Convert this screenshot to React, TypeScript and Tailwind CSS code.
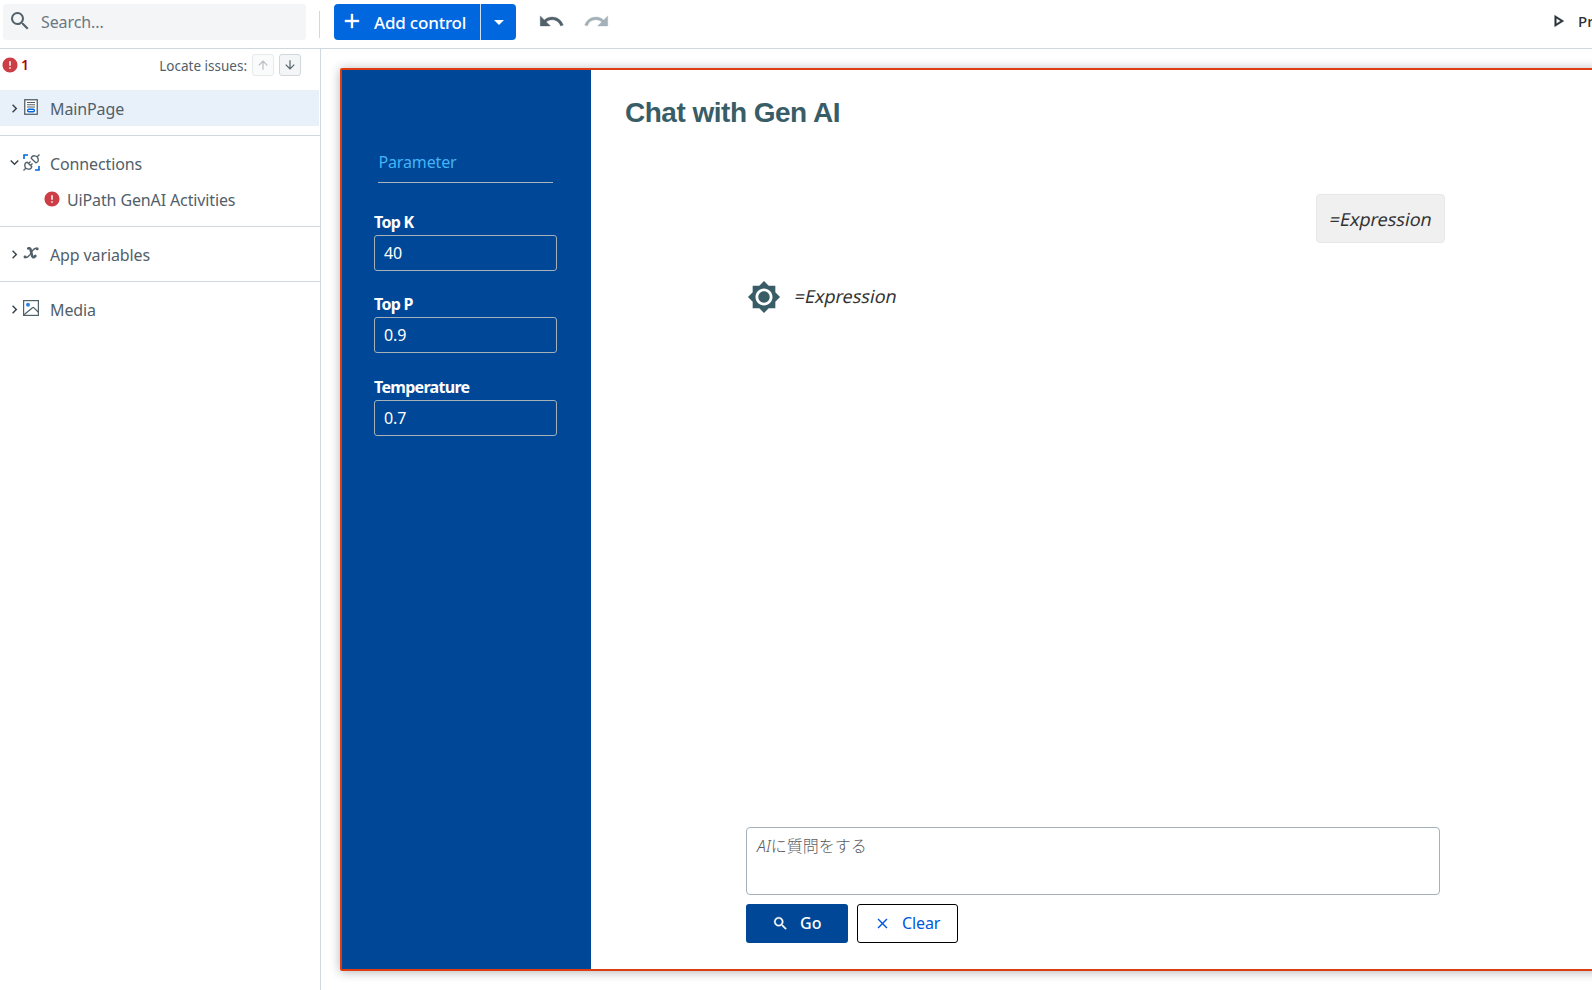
import type { ReactNode } from "react";
import {
  MdAdd,
  MdArrowDownward,
  MdArrowDropDown,
  MdArrowUpward,
  MdBrightness7,
  MdChevronRight,
  MdClose,
  MdError,
  MdExpandMore,
  MdOutlinePlayArrow,
  MdRedo,
  MdSearch,
  MdUndo,
} from "react-icons/md";

function PageIcon() {
  return (
    <svg className="h-4 w-4" viewBox="0 0 16 16" fill="none">
      <rect x="1.75" y="0.75" width="12.5" height="14.5" fill="#fff" stroke="#526069" strokeWidth="1.3" />
      <path d="M4 3.5h8M4 5.8h8M4 8h8" stroke="#526069" strokeWidth="1.1" />
      <rect x="4.6" y="10.2" width="6.8" height="2.6" rx="1.2" stroke="#0067df" strokeWidth="1.4" />
    </svg>
  );
}

function ConnectionsIcon() {
  return (
    <svg className="h-[17px] w-[17px] shrink-0" viewBox="0 0 17 17" fill="none">
      <path d="M1 5V1h4M16 12v4h-4" stroke="#0067df" strokeWidth="1.6" />
      <g stroke="#526069" strokeWidth="1.3">
        <path d="M8.2 4.2 12.8 8.8C14.3 8.4 15.6 7 15.2 5 14.9 3.4 13.6 2 12 1.8 10 1.5 8.6 2.7 8.2 4.2Z" />
        <path d="M14.2 2.8 16.5 0.5M4.2 8.2 8.8 12.8C8.4 14.3 7 15.3 5 15.2 3.4 15 2 13.6 1.8 12 1.6 10 2.7 8.6 4.2 8.2Z" />
        <path d="M2.8 14.2.5 16.5M5.5 9.5 7.5 7.5M7.5 11.5 9.5 9.5" />
      </g>
    </svg>
  );
}

function VariableIcon() {
  return (
    <svg className="h-3 w-4" viewBox="0 0 16 12" fill="none" stroke="#526069" strokeLinecap="round">
      <path d="M5.2 1.4C7 .9 7.5 1.8 7.9 3.7L8.9 8.3C9.3 10.3 10.4 11 12.3 9" strokeWidth="2.6" />
      <path d="M14.6 1.5C11 .2 9.5 3.5 8 6 6.5 8.5 4.5 11.5 1.5 10.3" strokeWidth="1.3" />
      <path d="M14 1.9h.3M1.9 9.9h.3" strokeWidth="2.6" />
    </svg>
  );
}

function MediaIcon() {
  return (
    <svg className="h-4 w-4" viewBox="0 0 16 16" fill="none">
      <rect x=".6" y=".6" width="14.8" height="14.8" stroke="#526069" strokeWidth="1.2" />
      <circle cx="5" cy="4.8" r="2" fill="#2f80e4" />
      <path d="M1 14.8 9.5 7.7Q10.3 7.1 11 7.8L15.2 12" stroke="#526069" strokeWidth="1.2" />
    </svg>
  );
}

function TreeRow({ icon, label, open, active }: { icon: ReactNode; label: string; open?: boolean; active?: boolean }) {
  return (
    <div className={`mr-px flex h-9 items-center pl-[6px] ${active ? "bg-[#e8f0fa]" : "pb-[2px]"}`}>
      {open ? <MdExpandMore className="-mt-[2px] size-[17px] text-[#374148]" /> : <MdChevronRight className="size-[17px] text-[#374148]" />}
      <span className="-mt-[2px] flex w-4 shrink-0 justify-center">{icon}</span>
      <span className="ml-[11px] pt-0.5 tracking-[-0.12px]">{label}</span>
    </div>
  );
}

function Field({ label, value }: { label: string; value: string }) {
  return (
    <div>
      <div className="h-6 text-[16px] leading-[23px] font-bold tracking-[-0.7px]">{label}</div>
      <div className="flex h-9 items-center rounded-[3px] border border-[#a4b1b8] pl-[9px] text-[16px] tracking-[-0.15px]">{value}</div>
    </div>
  );
}

export default function App() {
  return (
    <div className="flex h-[990px] w-[1592px] flex-col overflow-hidden bg-white font-['Noto_Sans','Noto_Sans_CJK_JP',sans-serif] text-[16px] text-[#526069]">
      <header className="flex h-[49px] shrink-0 items-start border-b border-[#cfd8dd] pt-1 pl-[3px]">
        <div className="flex h-9 w-[303px] items-center rounded-[3px] bg-[#f4f5f7] pl-[5px]">
          <MdSearch className="-mt-[2px] size-6" />
          <span className="ml-[9px] tracking-[-0.1px] text-[#6b7882]">Search...</span>
        </div>
        <div className="mt-[7px] ml-[13px] h-[27px] w-px bg-[#cfd8dd]" />
        <div className="ml-[14px] flex h-9 w-[182px] overflow-hidden rounded-[4px] bg-[#0067df] text-white">
          <div className="flex w-[147px] items-center border-r border-white/80 pl-[6px]">
            <MdAdd className="-mt-[3px] size-6 shrink-0 [&>path:last-child]:stroke-white [&>path:last-child]:stroke-[0.4px]" />
            <span className="mt-[1px] ml-[10px] text-[17px] font-medium tracking-[-0.2px] whitespace-nowrap">Add control</span>
          </div>
          <div className="flex flex-1 items-center justify-center">
            <MdArrowDropDown className="size-6" />
          </div>
        </div>
        <MdUndo className="mt-[4px] ml-[22px] size-[27px] [&>path:last-child]:stroke-current [&>path:last-child]:stroke-[0.3px]" />
        <MdRedo className="mt-[4px] ml-[18px] size-[27px] text-[#a4b1b8] [&>path:last-child]:stroke-current [&>path:last-child]:stroke-[0.3px]" />
        <div className="ml-auto flex h-9 w-[44px] shrink-0 items-center overflow-hidden text-[#273139]">
          <MdOutlinePlayArrow className="-mt-[2px] size-[20px] shrink-0 [&>path:last-child]:stroke-current [&>path:last-child]:stroke-[0.4px]" />
          <span className="-mt-[2px] ml-[10px] text-[15px] font-medium">Preview</span>
        </div>
      </header>

      <div className="flex min-h-0 flex-1">
        <aside className="w-[321px] shrink-0 border-r border-[#cfd8dd]">
          <div className="flex h-[41px] items-start pt-[5px] pl-px">
            <MdError className="mt-[2px] size-[18px] text-[#cc3d45]" />
            <span className="ml-[2px] text-[14px] leading-[22px] font-semibold text-[#a6040a]">1</span>
            <span className="ml-auto text-[13.5px] leading-[24px] whitespace-nowrap">Locate issues:</span>
            <div className="ml-[5px] flex size-[22px] items-center justify-center rounded-[3px] border border-[#e6eaed] bg-[#fafbfb] text-[#b5bdc2]">
              <MdArrowUpward className="size-[14px]" />
            </div>
            <div className="mr-[19px] ml-[5px] flex size-[22px] items-center justify-center rounded-[3px] border border-[#cfd8dd] bg-[#f4f5f7]">
              <MdArrowDownward className="size-[14px]" />
            </div>
          </div>
          <div className="border-b border-[#cfd8dd] pb-[9px]">
            <TreeRow icon={<PageIcon />} label="MainPage" active />
          </div>
          <div className="border-b border-[#cfd8dd] pt-[10px] pb-2">
            <TreeRow icon={<ConnectionsIcon />} label="Connections" open />
            <div className="flex h-9 items-center pl-[43px]">
              <MdError className="-mt-[3px] size-[18px] text-[#cc3d45]" />
              <span className="ml-[6px] tracking-[-0.13px]">UiPath GenAI Activities</span>
            </div>
          </div>
          <div className="border-b border-[#cfd8dd] pt-[10px] pb-2">
            <TreeRow icon={<VariableIcon />} label="App variables" />
          </div>
          <div className="pt-[10px]">
            <TreeRow icon={<MediaIcon />} label="Media" />
          </div>
        </aside>

        <main className="min-w-0 flex-1 overflow-hidden pt-[19px] pl-[19px]">
          <div className="flex h-[903px] w-[1270px] rounded-[2px] border-2 border-[#de3c12] shadow-[0_1px_11px_rgba(0,0,0,0.3)]">
            <section className="w-[249px] shrink-0 bg-[#004797] pl-8 text-white">
              <div className="mt-[81px] ml-1 h-[32px] w-[175px] border-b border-[#a9b5bd] pl-[0.5px] leading-[22px] tracking-[-0.15px] text-[#42b4f8]">Parameter</div>
              <div className="mt-[28px] flex w-[183px] flex-col gap-[22.4px]">
                <Field label="Top K" value="40" />
                <Field label="Top P" value="0.9" />
                <Field label="Temperature" value="0.7" />
              </div>
            </section>
            <section className="flex flex-1 flex-col">
              <h1 className="mt-[24px] ml-[34px] h-[36px] font-['Liberation_Sans',Arial,sans-serif] text-[28px] leading-[38px] font-bold tracking-[-0.5px] text-[#385d67]">Chat with Gen AI</h1>
              <div className="mt-[64px] ml-[725px] flex h-[49px] w-[129px] items-center rounded-[4px] border border-[#e6e7e8] bg-[#f0f0f0] pl-[12px] text-[18px] text-[#333]">
                <span className="mt-px ml-[0.5px] -skew-x-12">=Expression</span>
              </div>
              <div className="mt-[37px] ml-[155px] flex h-[34px] items-center">
                <MdBrightness7 className="ml-[0.5px] size-[34px] text-[#385d67]" />
                <span className="-mt-[2px] ml-[14.5px] -skew-x-12 text-[18px] text-[#333]">=Expression</span>
              </div>
              <div className="mt-[513px] ml-[155px] h-[68px] w-[694px] shrink-0 rounded-[4px] border border-[#a4b1b8] pt-[6px] pl-[10px] leading-6 font-light text-[#5c5c5c]"><span className="italic">AI</span>に質問をする</div>
              <div className="mt-[9px] ml-[155px] flex gap-[9px]">
                <div className="flex h-[39px] w-[102px] items-center rounded-[3px] bg-[#004797] pl-[26px] text-[16px] font-medium text-white">
                  <MdSearch className="-mt-px size-[17px] [&>path:last-child]:stroke-white [&>path:last-child]:stroke-[0.5px]" />
                  <span className="-mt-px ml-[11px]">Go</span>
                </div>
                <div className="flex h-[39px] w-[101px] items-center rounded-[3px] border border-black pl-[16px] text-[16px] text-[#0057dc]">
                  <MdClose className="-mt-px size-[17px]" />
                  <span className="-mt-[2px] ml-[11px] tracking-[-0.1px]">Clear</span>
                </div>
              </div>
            </section>
          </div>
        </main>
      </div>
    </div>
  );
}
